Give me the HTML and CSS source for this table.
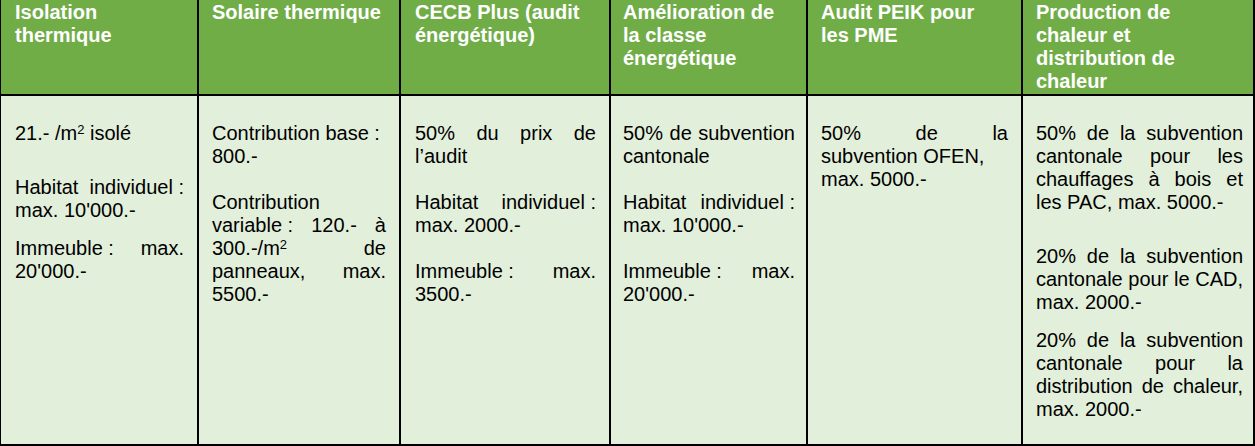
FILE: index.html
```html
<!DOCTYPE html>
<html lang="fr">
<head>
<meta charset="utf-8">
<title>Subventions</title>
<link rel="stylesheet" href="styles.css">
</head>
<body>
<div class="grid">
  <div class="cell head c1">Isolation thermique</div>
  <div class="cell head c2">Solaire thermique</div>
  <div class="cell head c3">CECB Plus (audit énergétique)</div>
  <div class="cell head c4">Amélioration de la classe énergétique</div>
  <div class="cell head c5">Audit PEIK pour les PME</div>
  <div class="cell head c6">Production de chaleur et distribution de chaleur</div>

  <div class="cell body c1">
    <p>21.- /m<sup>2</sup> isolé</p>
    <p class="gap-l">Habitat <span class="nb">individuel :</span> max. 10'000.-</p>
    <p class="gap-s"><span class="nb">Immeuble :</span> max. 20'000.-</p>
  </div>
  <div class="cell body c2">
    <p><span class="nb">Contribution base :</span><br>800.-</p>
    <p class="gap-m">Contribution <span class="nb">variable :</span> 120.- à 300.-/m<sup>2</sup> de panneaux, max. 5500.-</p>
  </div>
  <div class="cell body c3">
    <p>50% du prix de l’audit</p>
    <p class="gap-m">Habitat <span class="nb">individuel :</span> max. 2000.-</p>
    <p class="gap-m"><span class="nb">Immeuble :</span> max. 3500.-</p>
  </div>
  <div class="cell body c4">
    <p>50% de subvention cantonale</p>
    <p class="gap-m">Habitat <span class="nb">individuel :</span> max. 10'000.-</p>
    <p class="gap-m"><span class="nb">Immeuble :</span> max. 20'000.-</p>
  </div>
  <div class="cell body c5">
    <p>50% de la subvention OFEN,<br>max. 5000.-</p>
  </div>
  <div class="cell body c6">
    <p>50% de la subvention cantonale pour les chauffages à bois et les PAC, max. 5000.-</p>
    <p class="gap-l">20% de la subvention cantonale pour le CAD, max. 2000.-</p>
    <p class="gap-s">20% de la subvention cantonale pour la distribution de chaleur, max. 2000.-</p>
  </div>
</div>
</body>
</html>
```

FILE: styles.css
```css
html, body {
  margin: 0;
  padding: 0;
  background: #ffffff;
}

.grid {
  display: grid;
  grid-template-columns: 199px 202px 210px 197px 215px 232px;
  grid-template-rows: 96px 350px;
  width: 1255px;
  font-family: "Liberation Sans", Arial, sans-serif;
  font-size: 20px;
  line-height: 23px;
}

.cell {
  box-sizing: border-box;
  border-right: 2px solid #000;
  border-bottom: 2px solid #000;
  padding: 0 13px;
}

.c1 {
  border-left: 1px solid #000;
  padding-left: 14px;
}

.c3 {
  padding-left: 14px;
}

.c4 {
  padding-left: 12px;
  padding-right: 11px;
}

.c6 {
  padding-right: 10px;
}

.head {
  background: #70ad47;
  color: #ffffff;
  font-weight: bold;
  padding-top: 1px;
}

.head.c5 {
  padding-right: 16px;
}

.body {
  background: #e2efda;
  color: #000000;
  padding-top: 26px;
  text-align: justify;
}

.body p {
  margin: 0;
}

.body .gap-s {
  margin-top: 15px;
}

.body .gap-m {
  margin-top: 23px;
}

.body .gap-l {
  margin-top: 31px;
}

.nb {
  display: inline-block;
}

sup {
  font-size: 13px;
  line-height: 0;
  vertical-align: 6px;
}
```
